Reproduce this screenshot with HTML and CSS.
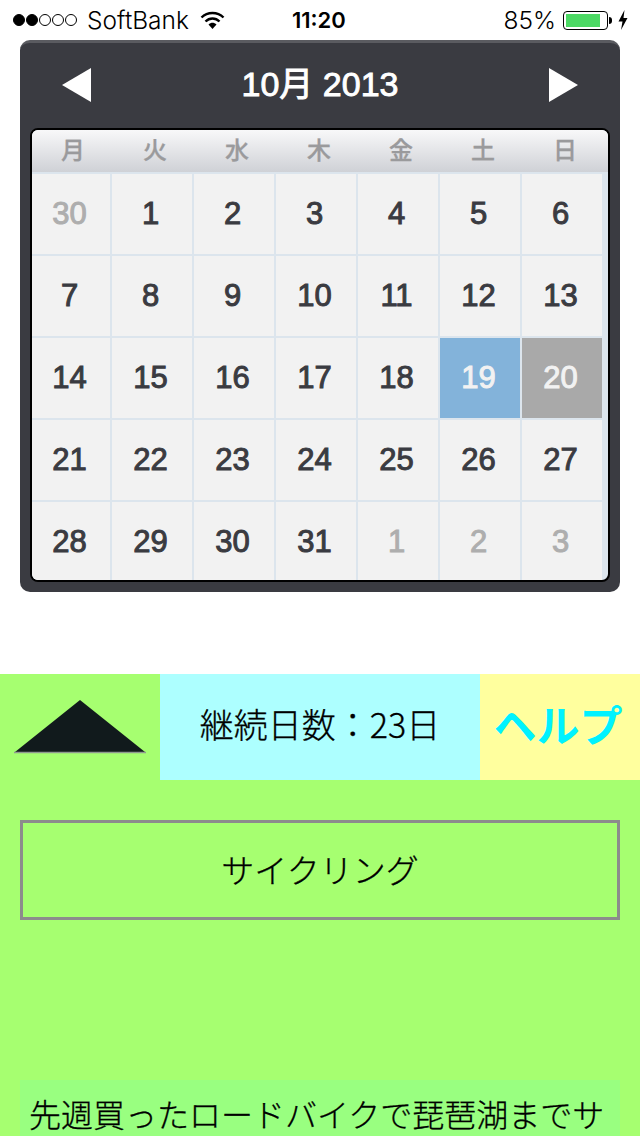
FILE: index.html
```html
<!DOCTYPE html>
<html lang="ja">
<head>
<meta charset="utf-8">
<title>カレンダー</title>
<link rel="stylesheet" href="styles.css">
</head>
<body>
<div class="screen">
  <div class="status">
    <div class="status-left">
      <span class="signal"><i class="on"></i><i class="on"></i><i></i><i></i><i></i></span>
      <span class="carrier">SoftBank</span>
      <svg class="wifi" width="26" height="20" viewBox="0 0 26 20"><path d="M1.500 7.500C7.500 1.500 17.500 1.500 23.500 7.500" fill="none" stroke="#000" stroke-width="2.400"/><path d="M5.500 11.500C9.500 7.500 15.500 7.500 19.500 11.500" fill="none" stroke="#000" stroke-width="2.400"/><path d="M8.500 14.500C11 12.200 14 12.200 16.500 14.500L12.500 19Z" fill="#000"/></svg>
    </div>
    <div class="time">11:20</div>
    <div class="status-right">
      <span class="pct">85%</span>
      <span class="battery"><span class="level"></span></span><span class="nub"></span>
      <svg class="bolt" width="10" height="20" viewBox="0 0 10 20"><path d="M6.500 0L0.500 11.500H4.500L3 20L9.500 8H5.500Z" fill="#000"/></svg>
    </div>
  </div>

  <div class="calendar">
    <div class="cal-head">
      <svg class="arrow" width="30" height="34" viewBox="0 0 30 34"><path d="M1 17L30 0V34Z" fill="#fff"/></svg>
      <div class="month">10月 2013</div>
      <svg class="arrow" width="30" height="34" viewBox="0 0 30 34"><path d="M29 17L0 0V34Z" fill="#fff"/></svg>
    </div>
    <div class="cal-body">
      <div class="weekdays"><span>月</span><span>火</span><span>水</span><span>木</span><span>金</span><span>土</span><span>日</span></div>
      <div class="days">
        <div class="day other">30</div><div class="day">1</div><div class="day">2</div><div class="day">3</div><div class="day">4</div><div class="day">5</div><div class="day">6</div>
        <div class="day">7</div><div class="day">8</div><div class="day">9</div><div class="day">10</div><div class="day">11</div><div class="day">12</div><div class="day">13</div>
        <div class="day">14</div><div class="day">15</div><div class="day">16</div><div class="day">17</div><div class="day">18</div><div class="day selected">19</div><div class="day today">20</div>
        <div class="day">21</div><div class="day">22</div><div class="day">23</div><div class="day">24</div><div class="day">25</div><div class="day">26</div><div class="day">27</div>
        <div class="day">28</div><div class="day">29</div><div class="day">30</div><div class="day">31</div><div class="day other">1</div><div class="day other">2</div><div class="day other">3</div>
      </div>
    </div>
  </div>

  <div class="panel">
    <div class="toolbar">
      <div class="tool-up">
        <svg width="134" height="56" viewBox="0 0 134 56"><path d="M67 1L132 53H2Z" fill="#111a1c"/><path d="M1 53.500H133" stroke="#8f9a8f" stroke-width="1.500"/></svg>
      </div>
      <div class="tool-days">継続日数：23日</div>
      <div class="tool-help">ヘルプ</div>
    </div>
    <div class="activity">サイクリング</div>
    <div class="note">先週買ったロードバイクで琵琶湖までサ</div>
  </div>
</div>
</body>
</html>
```
FILE: styles.css
```css
* { box-sizing: border-box; }
html, body { margin: 0; padding: 0; background: #fff; }
.screen {
  width: 640px;
  height: 1136px;
  overflow: hidden;
  font-family: "Liberation Sans", "Noto Sans CJK JP", sans-serif;
}
.status {
  height: 40px;
  display: flex;
  align-items: center;
  justify-content: space-between;
  padding: 0 12px 0 13px;
  font-family: "Inter", "Liberation Sans", sans-serif;
  font-weight: 300;
  font-size: 24.500px;
  color: #000;
  position: relative;
}
.status-left, .status-right { display: flex; align-items: center; }
.signal { display: flex; gap: 1px; }
.signal i {
  width: 12px;
  height: 12px;
  border: 1px solid #000;
  border-radius: 50%;
}
.signal i.on { background: #000; }
.carrier { margin-left: 10px; }
.wifi { margin-left: 11px; }
.time {
  position: absolute;
  left: 292px;
  font-weight: 600;
  font-size: 22px;
}
.pct { margin-right: 7px; }
.battery {
  width: 45px;
  height: 19px;
  border: 1px solid #000;
  border-radius: 4px;
  padding: 2px;
  display: flex;
}
.level { width: 34px; background: #4cd964; }
.nub {
  width: 3px;
  height: 7px;
  margin-left: 1px;
  background: #000;
  border-radius: 0 3px 3px 0;
}
.bolt { margin-left: 6px; }

.calendar {
  width: 600px;
  height: 552px;
  margin-left: 20px;
  background: #3a3b41;
  border-top: 3px solid #5a5b60;
  border-radius: 10px;
  padding: 0 10px;
}
.cal-head {
  height: 85px;
  display: flex;
  align-items: center;
  justify-content: space-between;
  padding: 0 31px;
  color: #fff;
}
.month {
  font-family: "Liberation Sans", "Noto Sans CJK JP", sans-serif;
  font-size: 34px;
  font-weight: 400;
  -webkit-text-stroke: 0.9px #fff;
  margin-top: -9px;
}
.cal-head .arrow { margin-top: -1px; }
.cal-body {
  height: 454px;
  border: 2px solid #000;
  border-radius: 8px;
  overflow: hidden;
  background: #dce5ed;
}
.weekdays {
  height: 44px;
  display: grid;
  grid-template-columns: repeat(7, 82px);
  background: linear-gradient(#f8f8f9, #cfd1d6);
  border-bottom: 2px solid #dce5ed;
  color: #9a9a9c;
  font-family: "Noto Sans CJK JP", sans-serif;
  font-size: 24px;
  font-weight: 500;
  -webkit-text-stroke: 0.3px #9a9a9c;
  line-height: 38px;
  text-align: center;
  padding-right: 4px;
}
.days {
  display: grid;
  grid-template-columns: repeat(7, 80px);
  grid-auto-rows: 80px;
  gap: 2px;
  padding: 0 6px 0 0;
}
.day {
  background: #f2f2f2;
  color: #3a3b41;
  font-family: "Liberation Sans", sans-serif;
  font-size: 31px;
  font-weight: 400;
  -webkit-text-stroke: 1px currentColor;
  display: flex;
  align-items: center;
  justify-content: center;
  padding: 0 3px 0 0;
  margin-left: -2px;
  width: 80px;
}
.day:nth-child(7n+1) { margin-left: 0; width: 78px; }
.day.other { color: #aeaeae; }
.day.selected { background: #83b3da; color: #f2f2f2; }
.day.today { background: #a9a9a9; color: #f2f2f2; }

.panel {
  margin-top: 82px;
  height: 462px;
  background: #a6ff70;
  display: flex;
  flex-direction: column;
  font-family: "Noto Sans CJK JP", sans-serif;
}
.toolbar {
  flex: none;
  height: 106px;
  display: grid;
  grid-template-columns: 160px 320px 160px;
}
.tool-up {
  display: flex;
  justify-content: center;
  padding: 25px 0 0 0;
}
.tool-days {
  background: #adffff;
  display: flex;
  align-items: center;
  justify-content: center;
  font-size: 34px;
  font-weight: 300;
  -webkit-text-stroke: 0.3px #000;
  color: #000;
  padding-bottom: 8px;
}
.tool-help {
  background: #ffff9e;
  display: flex;
  align-items: center;
  justify-content: center;
  color: #00f2ff;
  font-size: 43px;
  font-weight: 700;
  padding: 0 4px 8px 0;
}
.activity {
  flex: none;
  margin: 40px 20px 0;
  height: 100px;
  border: 3px solid #8c8c8c;
  display: flex;
  align-items: center;
  justify-content: center;
  font-size: 33px;
  font-weight: 300;
  -webkit-text-stroke: 0.3px #000;
  color: #000;
  padding-bottom: 2px;
}
.note {
  flex: none;
  margin: 160px 20px 0;
  padding: 0 9px;
  height: 56px;
  background: #99ff80;
  font-size: 32px;
  font-weight: 300;
  -webkit-text-stroke: 0.3px #000;
  line-height: 66px;
  color: #000;
  white-space: nowrap;
}
```
